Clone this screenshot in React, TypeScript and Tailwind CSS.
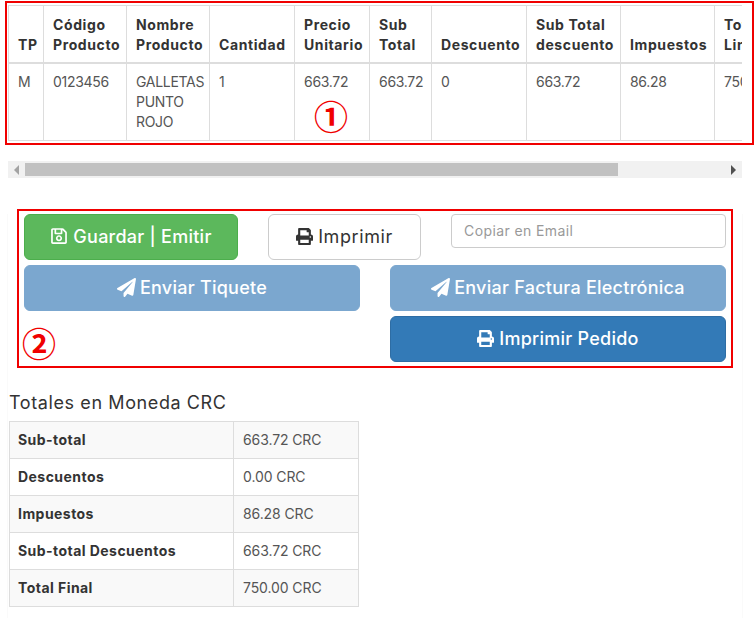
import { FaPaperPlane, FaPrint, FaRegSave } from "react-icons/fa";

const columns = [
  { label: ["TP"], value: "M", width: "w-[35px]" },
  { label: ["Código", "Producto"], value: "0123456", width: "w-[83px]" },
  { label: ["Nombre", "Producto"], value: "GALLETAS PUNTO ROJO", width: "w-[83px]" },
  { label: ["Cantidad"], value: "1", width: "w-[85px]" },
  { label: ["Precio", "Unitario"], value: "663.72", width: "w-[75px]" },
  { label: ["Sub", "Total"], value: "663.72", width: "w-[62px]" },
  { label: ["Descuento"], value: "0", width: "w-[95px]" },
  { label: ["Sub Total", "descuento"], value: "663.72", width: "w-[94px]" },
  { label: ["Impuestos"], value: "86.28", width: "w-[94px]" },
  { label: ["Total", "Linea"], value: "750.00", width: "w-[80px]" },
];

const totals = [
  { label: "Sub-total", value: "663.72 CRC" },
  { label: "Descuentos", value: "0.00 CRC" },
  { label: "Impuestos", value: "86.28 CRC" },
  { label: "Sub-total Descuentos", value: "663.72 CRC" },
  { label: "Total Final", value: "750.00 CRC" },
];

function Marker({ n, className }: { n: string; className: string }) {
  return (
    <div className={`absolute flex h-[32px] w-[32px] items-center justify-center font-['Noto_Sans_CJK_JP',sans-serif] text-[34px] leading-none font-bold tracking-normal text-[#f00000] ${className}`}>
      {n}
    </div>
  );
}

export default function App() {
  return (
    <div className="relative h-[618px] w-[756px] overflow-hidden bg-white font-['Inter','Liberation_Sans',sans-serif] text-[14px] text-[#555]">
      <div className="pl-2 pr-[14px] pt-[5px]">
        <div className="overflow-hidden">
          <table className="w-[780px] table-fixed border-collapse">
            <thead>
              <tr>
                {columns.map((c) => (
                  <th key={c.label[0]} className={`${c.width} h-[57px] border border-b-2 border-[#ddd] px-[9px] pb-[7px] text-left align-bottom text-[14px] leading-[20px] font-bold tracking-[0.6px] text-[#333]`}>
                    {c.label.map((l) => (
                      <div key={l} className="whitespace-nowrap">{l}</div>
                    ))}
                  </th>
                ))}
              </tr>
            </thead>
            <tbody>
              <tr>
                {columns.map((c) => (
                  <td key={c.label[0]} className="h-[78px] border border-[#ddd] px-[9px] pt-[8px] align-top text-[14px] leading-[20px] tracking-[-0.3px]">
                    {c.value}
                  </td>
                ))}
              </tr>
            </tbody>
          </table>
        </div>

        <div className="mt-[20px] flex h-[17px] items-center bg-[#f1f1f1]">
          <div className="flex w-[17px] justify-center">
            <div className="h-0 w-0 border-y-[5px] border-r-[5px] border-y-transparent border-r-[#a3a3a3]" />
          </div>
          <div className="h-[13px] w-[593px] bg-[#c1c1c1]" />
          <div className="flex-1" />
          <div className="flex w-[17px] justify-center">
            <div className="h-0 w-0 border-y-[5px] border-l-[5px] border-y-transparent border-l-[#505050]" />
          </div>
        </div>
      </div>

      <div className="ml-[7px] h-[440px] w-[736px] border-x border-[#fafafa]">
        <div className="mt-[36px] ml-[16px] w-[702px] text-[18px] font-medium tracking-[0.25px]">
          <div className="flex items-start">
            <button className="flex h-[46px] w-[214px] items-center justify-center gap-[5px] rounded-[6px] border border-[#4cae4c] bg-[#5cb85c] pb-[2px] text-white">
              <FaRegSave className="text-[18px]" /> Guardar | Emitir
            </button>
            <button className="ml-[30px] flex h-[46px] w-[153px] items-center justify-center gap-[5px] rounded-[6px] border border-[#ccc] bg-white pb-[2px] font-normal tracking-[0.6px] text-[#333]">
              <FaPrint className="text-[17px]" /> Imprimir
            </button>
            <input
              placeholder="Copiar en Email"
              className="ml-[30px] h-[34px] w-[275px] rounded-[4px] border border-[#ccc] px-3 pb-[2px] text-[14px] font-normal tracking-[0.4px] placeholder:text-[#999]"
            />
          </div>
          <div className="mt-[5px] grid grid-cols-[336px_336px] gap-x-[30px] gap-y-[5px]">
            <button className="flex h-[46px] items-center justify-center gap-[4px] rounded-[6px] border border-[#7ba7cf] bg-[#7ba7cf] pb-[2px] text-white">
              <FaPaperPlane className="text-[19px]" /> Enviar Tiquete
            </button>
            <button className="flex h-[46px] items-center justify-center gap-[4px] rounded-[6px] border border-[#7ba7cf] bg-[#7ba7cf] pb-[2px] text-white">
              <FaPaperPlane className="text-[19px]" /> Enviar Factura Electrónica
            </button>
            <button className="col-start-2 flex h-[46px] items-center justify-center gap-[5px] rounded-[6px] border border-[#2e6da4] bg-[#337ab7] pb-[2px] text-white">
              <FaPrint className="text-[17px]" /> Imprimir Pedido
            </button>
          </div>
        </div>

        <div className="mt-[31px] ml-[1px] w-[350px]">
          <h4 className="text-[18px] leading-[20px] tracking-[0.6px] text-[#333]">Totales en Moneda CRC</h4>
          <table className="mt-[8px] w-[350px] table-fixed border-collapse">
            <tbody>
              {totals.map((t, i) => (
                <tr key={t.label} className={i % 2 === 0 ? "bg-[#f9f9f9]" : ""}>
                  <td className="h-[37px] w-[224px] border border-[#ddd] px-[8px] pb-[2px] font-bold tracking-[0.45px] whitespace-nowrap text-[#333]">{t.label}</td>
                  <td className="h-[37px] border border-[#ddd] px-[9px] pb-[2px] tracking-[-0.1px]">{t.value}</td>
                </tr>
              ))}
            </tbody>
          </table>
        </div>
      </div>

      {/* annotations on top of the screenshot */}
      <div className="pointer-events-none absolute top-[1px] left-[5px] h-[144px] w-[749px] border-2 border-[#f00000]" />
      <div className="pointer-events-none absolute top-[209px] left-[17px] h-[159px] w-[716px] border-2 border-[#f00000]" />
      <Marker n="①" className="top-[100px] left-[315px]" />
      <Marker n="②" className="top-[327px] left-[23px]" />
    </div>
  );
}
